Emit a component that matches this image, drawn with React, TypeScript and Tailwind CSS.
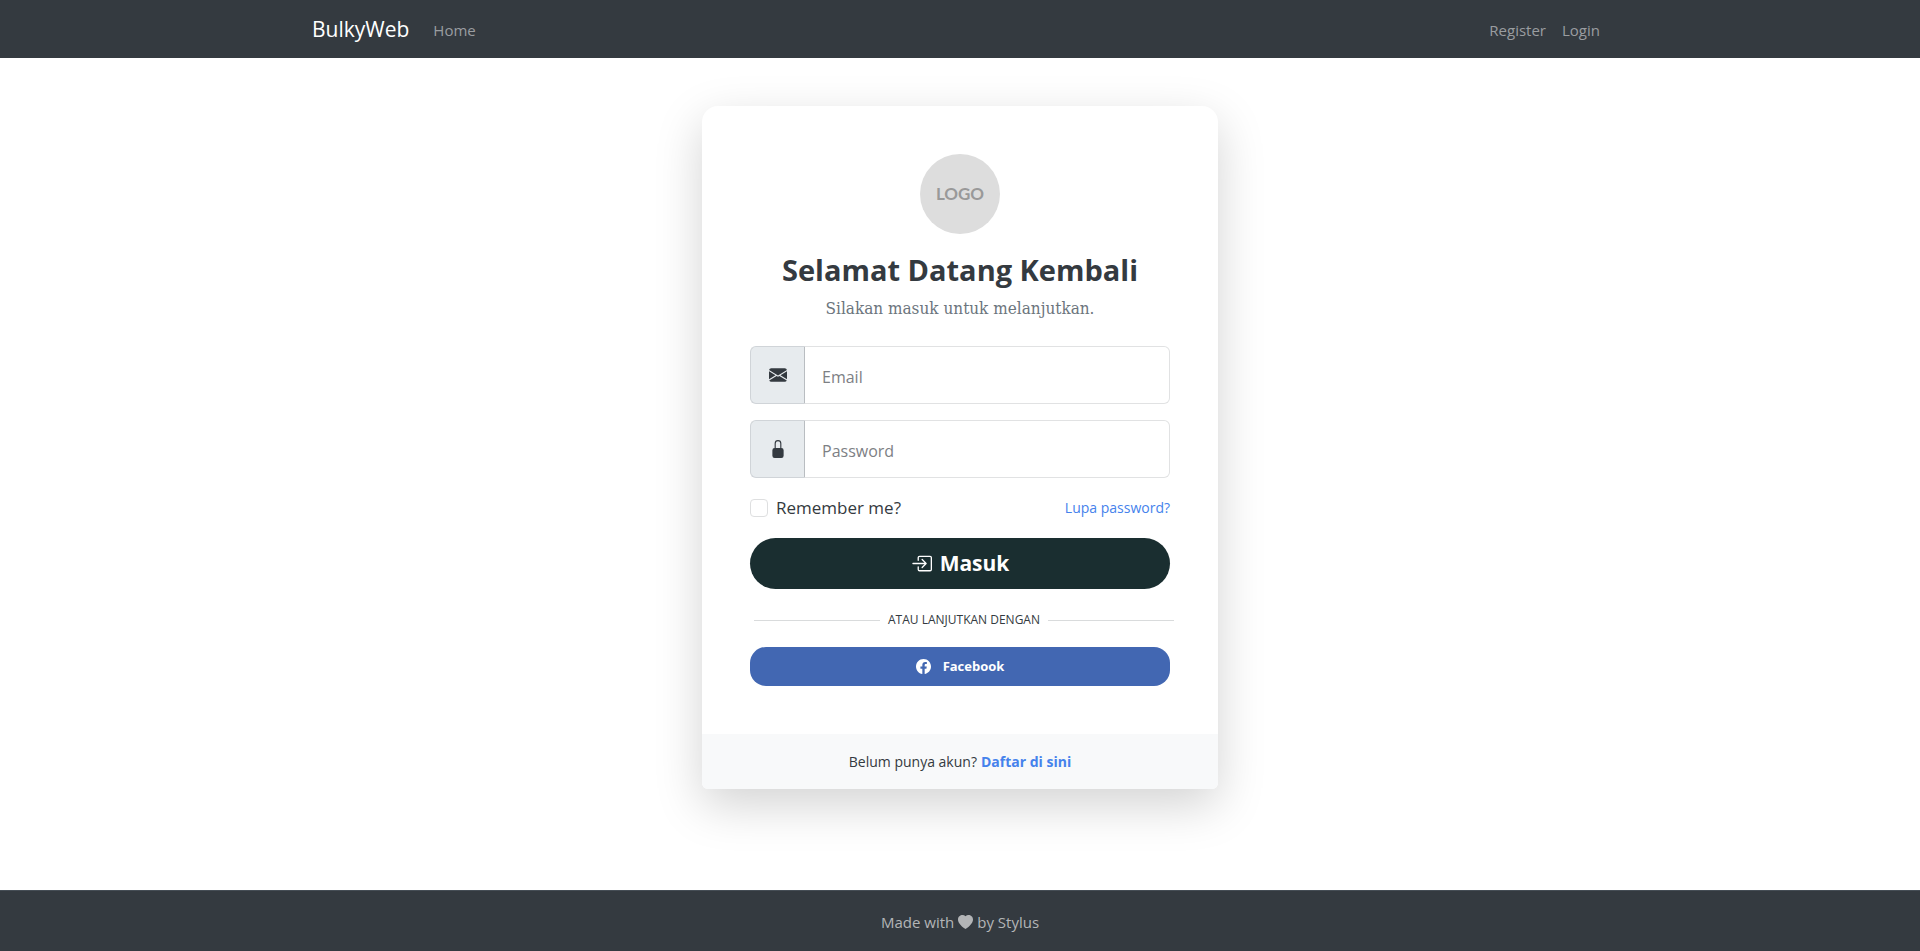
import type { ReactNode } from "react";
import { BsBoxArrowInRight, BsEnvelopeFill, BsFacebook, BsHeartFill, BsLockFill } from "react-icons/bs";

type FieldProps = { id: string; type: string; label: string; icon: ReactNode };

function Field({ id, type, label, icon }: FieldProps) {
  return (
    <div className="mb-4 flex h-[58px]">
      <label
        htmlFor={id}
        aria-label={label}
        className="flex w-[54px] shrink-0 items-center justify-center rounded-l-md border border-r-0 border-[#d0d4d8] bg-[#e7ebee] text-lg text-[#343a40]"
      >
        {icon}
      </label>
      <input
        id={id}
        type={type}
        placeholder={label}
        className="min-w-0 flex-1 rounded-r-md border border-[#e1e2e3] border-l-[#b9bdc1] bg-white px-[17px] pt-1 text-base placeholder:text-[#7d8084] outline-none"
      />
    </div>
  );
}

export default function App() {
  return (
    <div className="flex min-h-screen flex-col bg-white font-['Open_Sans',sans-serif] text-[#343a40]">
      <nav className="bg-[#343a40] px-4">
        <div className="mx-auto flex h-[58px] max-w-[1296px] items-center pt-0.5 text-[15px] text-[#9a9da0]">
          <a href="#" className="mr-6 text-[21px] text-white">BulkyWeb</a>
          <a href="#">Home</a>
          <div className="ml-auto mr-2 flex gap-4">
            <a href="#">Register</a>
            <a href="#">Login</a>
          </div>
        </div>
      </nav>

      <main className="flex flex-1 items-start justify-center px-4 py-12">
        <section className="w-full max-w-[516px] rounded-t-2xl rounded-b-md bg-white shadow-[0_16px_48px_rgba(0,0,0,0.175)]">
          <div className="p-12">
            <div className="mx-auto flex size-20 items-center justify-center rounded-full bg-[#dddddd] font-[Lato,sans-serif] text-[17px] font-bold text-[#999999]">
              LOGO
            </div>
            <h1 className="mt-4 text-center text-[29px] leading-10 font-bold">Selamat Datang Kembali</h1>
            <p className="mt-1 mb-6 text-center font-['DejaVu_Serif_Condensed','DejaVu_Serif',serif] text-[17px] leading-7 text-[#6c757d]">
              Silakan masuk untuk melanjutkan.
            </p>
            <form onSubmit={(e) => e.preventDefault()}>
              <Field id="email" type="email" label="Email" icon={<BsEnvelopeFill />} />
              <Field id="password" type="password" label="Password" icon={<BsLockFill />} />
              <div className="mb-4 flex h-7 items-center justify-between">
                <div className="flex items-center gap-2">
                  <input
                    id="remember"
                    type="checkbox"
                    className="size-[18px] appearance-none rounded border border-[#dedfe0] bg-white checked:bg-[#4582ec]"
                  />
                  <label htmlFor="remember" className="text-[17px]">Remember me?</label>
                </div>
                <a href="#" className="text-sm text-[#4582ec]">Lupa password?</a>
              </div>
              <button
                type="submit"
                className="flex h-[51px] w-full items-center justify-center gap-2 rounded-full bg-[#1a2e30] text-[21px] font-bold text-white"
              >
                <BsBoxArrowInRight />
                Masuk
              </button>
              <div className="ml-1 -mr-1 flex h-[58px] items-center gap-2 pt-1 text-xs">
                <span className="h-px flex-1 bg-[#d9dbdc]" />
                <span className="uppercase">Atau lanjutkan dengan</span>
                <span className="h-px flex-1 bg-[#d9dbdc]" />
              </div>
              <button
                type="button"
                className="flex h-[39px] w-full items-center justify-center gap-3 rounded-2xl bg-[#4267b2] text-[13px] font-bold text-white"
              >
                <BsFacebook className="text-[15px]" />
                Facebook
              </button>
            </form>
          </div>
          <div className="flex h-[55px] items-center justify-center gap-1 rounded-b-md bg-[#f8f9fa] text-sm">
            <span>Belum punya akun?</span>
            <a href="#" className="font-bold text-[#4582ec]">Daftar di sini</a>
          </div>
        </section>
      </main>

      <footer className="flex h-[61px] items-center justify-center gap-1 border-t border-[#454d55] bg-[#343a40] pt-0.5 text-[15px] text-[#b3b5b7]">
        <span>Made with</span>
        <BsHeartFill />
        <span>by Stylus</span>
      </footer>
    </div>
  );
}
